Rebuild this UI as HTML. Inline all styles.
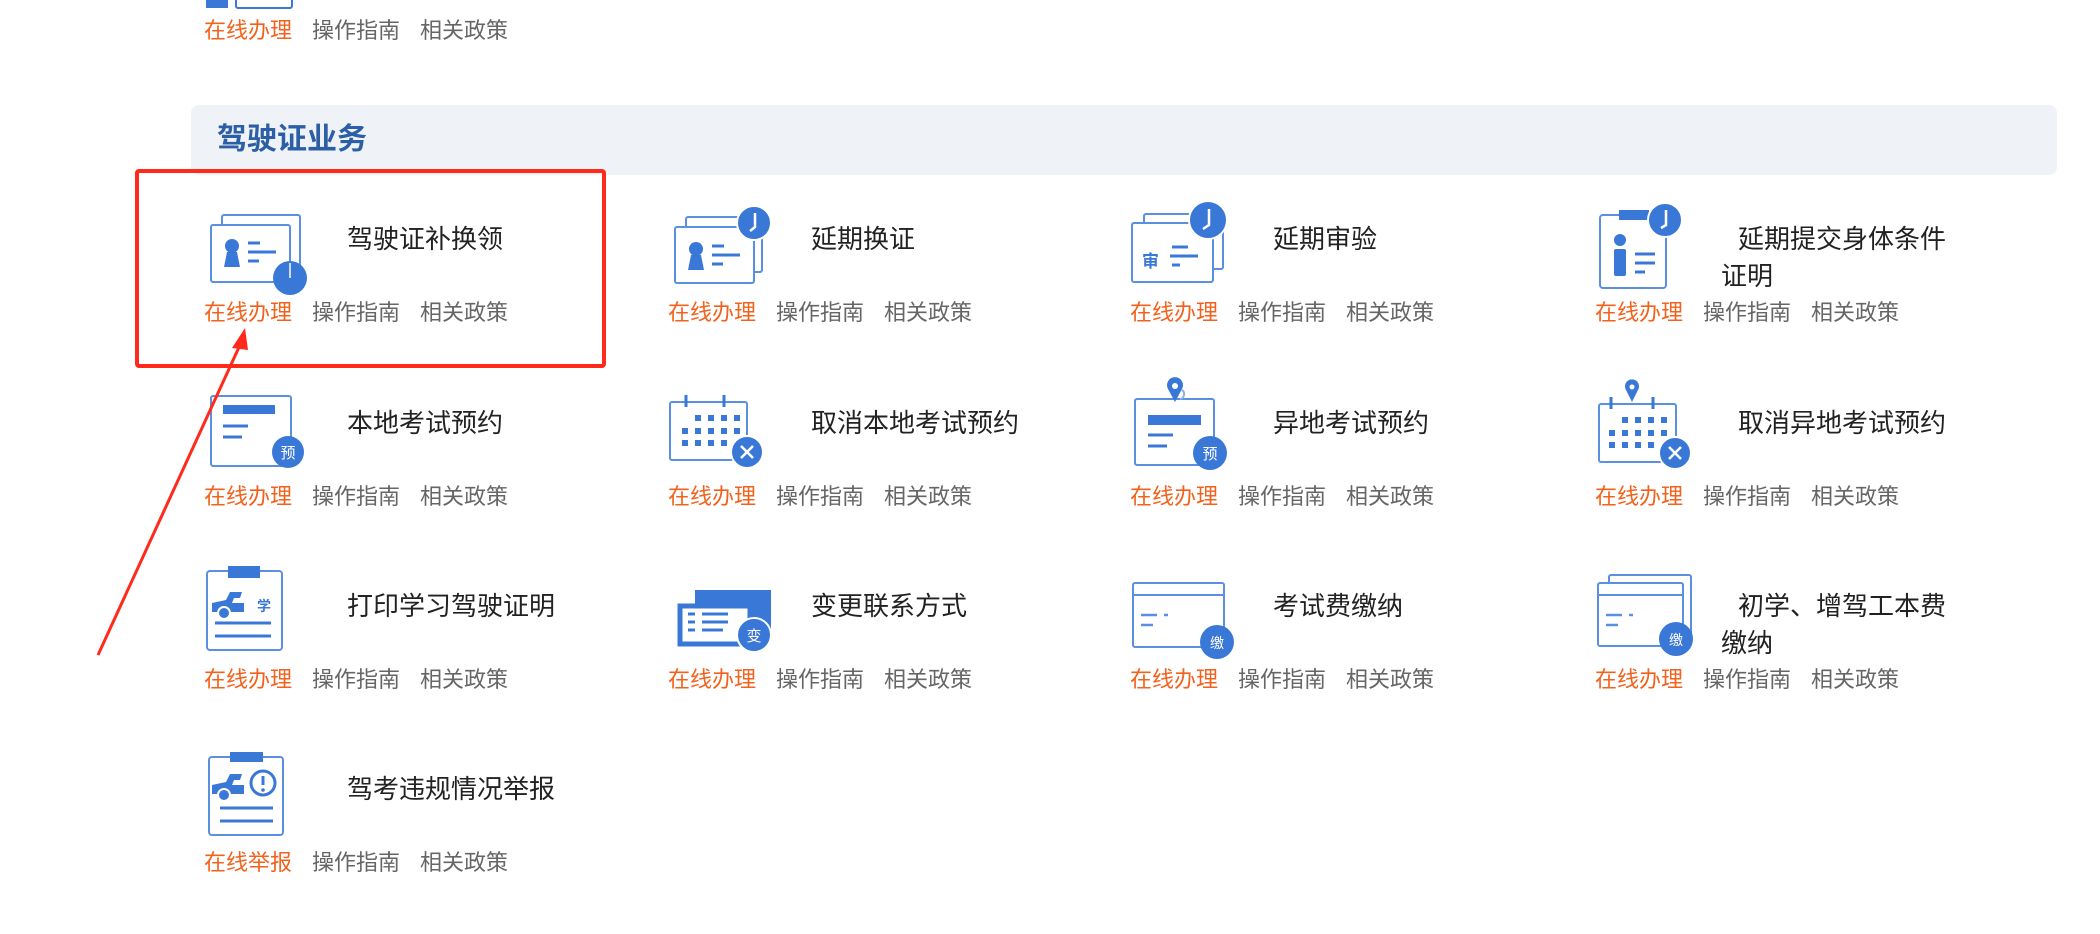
<!DOCTYPE html>
<html><head><meta charset="utf-8">
<style>
html,body{margin:0;padding:0;background:#fff;}
body{width:2100px;height:934px;position:relative;overflow:hidden;font-family:"Liberation Sans","Noto Sans CJK SC",sans-serif;}
.links{position:absolute;font-size:22px;line-height:30px;white-space:nowrap;color:#666;}
.links span{margin-right:20px;}
.links .o{color:#f2621d;}
.item{position:absolute;width:440px;height:150px;}
.item svg{position:absolute;left:0;top:0;overflow:visible;}
.item .t{position:absolute;left:143px;top:21px;font-size:26px;line-height:37px;color:#222;width:240px;}
.item .links{left:0;top:98px;}
.band{position:absolute;left:191px;top:105px;width:1866px;height:70px;background:#eff3f7;border-radius:8px;}
.band h2{margin:0;position:absolute;left:26px;top:16px;font-size:30px;line-height:38px;color:#2d5fa6;font-weight:bold;}
.red{position:absolute;left:135px;top:169px;width:463px;height:191px;border:4px solid #ff2a1c;border-radius:4px;}
</style></head><body>

<svg style="position:absolute;left:204px;top:0" width="110" height="12" viewBox="0 0 110 12"><rect x="2" y="0" width="22" height="8" fill="#3a78d8"/><rect x="32" y="-10" width="56" height="18" rx="2" fill="none" stroke="#3a78d8" stroke-width="2"/></svg>
<div class="links" style="left:204px;top:16px"><span class="o">在线办理</span><span>操作指南</span><span>相关政策</span></div>

<div class="band"><h2>驾驶证业务</h2></div>

<!-- row1 -->
<div class="item" style="left:204px;top:200px">
<svg width="120" height="100" viewBox="0 0 120 100" fill="none" stroke="#5b8fe0" stroke-width="2">
<rect x="18" y="15" width="78" height="55" rx="2"/>
<rect x="7" y="25" width="79" height="57" rx="2" fill="#fff"/>
<circle cx="28" cy="46" r="7" fill="#3a78d8" stroke="none"/>
<path d="M20 67 L23 52 L33 52 L36 67Z" fill="#3a78d8" stroke="none"/>
<path d="M44 43H56M44 52H72M44 61H55" stroke="#3a78d8" stroke-width="3"/>
<circle cx="86" cy="78" r="17" fill="#3a78d8" stroke="none"/>
<path d="M86 63V78" stroke="#fff" stroke-width="1.5"/>
</svg>
<div class="t">驾驶证补换领</div>
<div class="links"><span class="o">在线办理</span><span>操作指南</span><span>相关政策</span></div>
</div>

<div class="item" style="left:668px;top:200px">
<svg width="120" height="100" viewBox="0 0 120 100" fill="none" stroke="#5b8fe0" stroke-width="2">
<rect x="18" y="17" width="76" height="55" rx="2"/>
<rect x="7" y="27" width="79" height="56" rx="2" fill="#fff"/>
<circle cx="28" cy="49" r="7" fill="#3a78d8" stroke="none"/>
<path d="M20 70 L23 55 L33 55 L36 70Z" fill="#3a78d8" stroke="none"/>
<path d="M44 46H56M44 55H72M44 64H55" stroke="#3a78d8" stroke-width="3"/>
<circle cx="86" cy="23" r="17" fill="#3a78d8" stroke="#fff" stroke-width="2"/>
<path d="M87 13V27L82 31" stroke="#fff" stroke-width="2.5"/>
</svg>
<div class="t">延期换证</div>
<div class="links"><span class="o">在线办理</span><span>操作指南</span><span>相关政策</span></div>
</div>

<div class="item" style="left:1130px;top:200px">
<svg width="120" height="100" viewBox="0 0 120 100" fill="none" stroke="#5b8fe0" stroke-width="2">
<rect x="14" y="14" width="79" height="55" rx="2"/>
<rect x="2" y="23" width="81" height="59" rx="2" fill="#fff"/>
<text x="12" y="67" font-size="17" fill="#3a78d8" stroke="none" font-family="Noto Sans CJK SC" font-weight="bold">审</text>
<path d="M42 47H58M40 56H68M42 65H50" stroke="#3a78d8" stroke-width="3"/>
<circle cx="78" cy="20" r="19" fill="#3a78d8" stroke="#fff" stroke-width="2"/>
<path d="M79 9V25L73 29" stroke="#fff" stroke-width="2.5"/>
</svg>
<div class="t">延期审验</div>
<div class="links"><span class="o">在线办理</span><span>操作指南</span><span>相关政策</span></div>
</div>

<div class="item" style="left:1595px;top:200px">
<svg width="120" height="100" viewBox="0 0 120 100" fill="none" stroke="#5b8fe0" stroke-width="2">
<rect x="5" y="15" width="66" height="73" rx="3"/>
<rect x="24" y="10" width="30" height="10" fill="#3a78d8" stroke="none"/>
<circle cx="25" cy="40" r="6" fill="#3a78d8" stroke="none"/>
<rect x="19" y="49" width="12" height="27" rx="2" fill="#3a78d8" stroke="none"/>
<path d="M40 54H60M40 63H60M40 72H50" stroke="#3a78d8" stroke-width="3"/>
<circle cx="70" cy="20" r="17" fill="#3a78d8" stroke="#fff" stroke-width="2"/>
<path d="M71 10V25L66 28" stroke="#fff" stroke-width="2.5"/>
</svg>
<div class="t"><span>延期提交身体条件</span><br><span style="margin-left:-17px">证明</span></div>
<div class="links"><span class="o">在线办理</span><span>操作指南</span><span>相关政策</span></div>
</div>

<!-- row2 -->
<div class="item" style="left:204px;top:384px">
<svg width="120" height="100" viewBox="0 0 120 100" fill="none" stroke="#5b8fe0" stroke-width="2">
<rect x="7" y="12" width="80" height="70" rx="2"/>
<rect x="19" y="21" width="52" height="9" fill="#3a78d8" stroke="none"/>
<path d="M19 42H44M19 53H38" stroke="#3a78d8" stroke-width="3"/>
<circle cx="84" cy="68" r="16" fill="#3a78d8" stroke="none"/>
<text x="84" y="74" font-size="15" text-anchor="middle" fill="#fff" stroke="none" font-family="Noto Sans CJK SC">预</text>
</svg>
<div class="t">本地考试预约</div>
<div class="links"><span class="o">在线办理</span><span>操作指南</span><span>相关政策</span></div>
</div>

<div class="item" style="left:668px;top:384px">
<svg width="120" height="100" viewBox="0 0 120 100" fill="none" stroke="#5b8fe0" stroke-width="2">
<rect x="2" y="18" width="77" height="58" rx="2"/>
<path d="M18 11V23M56 11V23" stroke="#3a78d8" stroke-width="3"/>
<g fill="#3a78d8" stroke="none">
<rect x="27" y="31" width="6" height="6"/><rect x="40" y="31" width="6" height="6"/><rect x="53" y="31" width="6" height="6"/><rect x="66" y="31" width="6" height="6"/>
<rect x="14" y="44" width="6" height="6"/><rect x="27" y="44" width="6" height="6"/><rect x="40" y="44" width="6" height="6"/><rect x="53" y="44" width="6" height="6"/><rect x="66" y="44" width="6" height="6"/>
<rect x="14" y="56" width="6" height="6"/><rect x="27" y="56" width="6" height="6"/><rect x="40" y="56" width="6" height="6"/><rect x="53" y="56" width="6" height="6"/>
</g>
<circle cx="79" cy="68" r="16" fill="#3a78d8" stroke="#fff" stroke-width="2"/>
<path d="M73 62L85 74M85 62L73 74" stroke="#fff" stroke-width="2.5"/>
</svg>
<div class="t">取消本地考试预约</div>
<div class="links"><span class="o">在线办理</span><span>操作指南</span><span>相关政策</span></div>
</div>

<div class="item" style="left:1130px;top:384px">
<svg width="120" height="100" viewBox="0 0 120 100" fill="none" stroke="#5b8fe0" stroke-width="2">
<rect x="5" y="15" width="79" height="66" rx="2"/>
<path d="M45 18 L38 5 A8 8 0 1 1 52 5Z" fill="#3a78d8" stroke="none"/>
<circle cx="45" cy="2" r="3" fill="#fff" stroke="none"/>
<path d="M52 6 A5 5 0 0 1 50 15" stroke="#8fb1e8" stroke-width="2"/>
<rect x="18" y="31" width="53" height="10" fill="#3a78d8" stroke="none"/>
<path d="M18 51H43M18 62H37" stroke="#3a78d8" stroke-width="3"/>
<circle cx="80" cy="69" r="17" fill="#3a78d8" stroke="none"/>
<text x="80" y="75" font-size="15" text-anchor="middle" fill="#fff" stroke="none" font-family="Noto Sans CJK SC">预</text>
</svg>
<div class="t">异地考试预约</div>
<div class="links"><span class="o">在线办理</span><span>操作指南</span><span>相关政策</span></div>
</div>

<div class="item" style="left:1595px;top:384px">
<svg width="120" height="100" viewBox="0 0 120 100" fill="none" stroke="#5b8fe0" stroke-width="2">
<rect x="4" y="20" width="77" height="58" rx="2"/>
<path d="M16 13V25M58 13V25" stroke="#3a78d8" stroke-width="3"/>
<path d="M37 18 L31 6 A7 7 0 1 1 43 6Z" fill="#3a78d8" stroke="none"/>
<circle cx="37" cy="3" r="2.5" fill="#fff" stroke="none"/>
<g fill="#3a78d8" stroke="none">
<rect x="27" y="33" width="6" height="6"/><rect x="40" y="33" width="6" height="6"/><rect x="53" y="33" width="6" height="6"/><rect x="66" y="33" width="6" height="6"/>
<rect x="14" y="46" width="6" height="6"/><rect x="27" y="46" width="6" height="6"/><rect x="40" y="46" width="6" height="6"/><rect x="53" y="46" width="6" height="6"/><rect x="66" y="46" width="6" height="6"/>
<rect x="14" y="58" width="6" height="6"/><rect x="27" y="58" width="6" height="6"/><rect x="40" y="58" width="6" height="6"/><rect x="53" y="58" width="6" height="6"/>
</g>
<circle cx="80" cy="69" r="16" fill="#3a78d8" stroke="#fff" stroke-width="2"/>
<path d="M74 63L86 75M86 63L74 75" stroke="#fff" stroke-width="2.5"/>
</svg>
<div class="t">取消异地考试预约</div>
<div class="links"><span class="o">在线办理</span><span>操作指南</span><span>相关政策</span></div>
</div>

<!-- row3 -->
<div class="item" style="left:204px;top:567px">
<svg width="120" height="100" viewBox="0 0 120 100" fill="none" stroke="#5b8fe0" stroke-width="2">
<rect x="3" y="4" width="75" height="79" rx="3"/>
<rect x="24" y="-1" width="32" height="12" fill="#3a78d8" stroke="none"/>
<path d="M8 36 L22 33 L26 25 L38 25 L36 31 L30 31 L28 36 L40 36 L40 45 L8 45Z" fill="#3a78d8" stroke="none"/>
<circle cx="20" cy="46" r="6" fill="#3a78d8" stroke="#fff" stroke-width="2"/>
<text x="60" y="44" font-size="14" text-anchor="middle" fill="#3a78d8" stroke="none" font-family="Noto Sans CJK SC" font-weight="bold">学</text>
<path d="M11 56H67M11 69H67" stroke="#3a78d8" stroke-width="3"/>
</svg>
<div class="t">打印学习驾驶证明</div>
<div class="links"><span class="o">在线办理</span><span>操作指南</span><span>相关政策</span></div>
</div>

<div class="item" style="left:668px;top:567px">
<svg width="120" height="100" viewBox="0 0 120 100">
<rect x="27" y="23" width="76" height="50" fill="#3a78d8"/>
<rect x="12" y="39" width="70" height="38" fill="#fff" stroke="#3a78d8" stroke-width="5"/>
<path d="M20 47H27M34 47H60M20 55H27M34 55H60M20 63H27M34 63H55" stroke="#3a78d8" stroke-width="3"/>
<circle cx="86" cy="68" r="17" fill="#3a78d8" stroke="#fff" stroke-width="2"/>
<text x="86" y="74" font-size="15" text-anchor="middle" fill="#fff" font-family="Noto Sans CJK SC">变</text>
</svg>
<div class="t">变更联系方式</div>
<div class="links"><span class="o">在线办理</span><span>操作指南</span><span>相关政策</span></div>
</div>

<div class="item" style="left:1130px;top:567px">
<svg width="120" height="100" viewBox="0 0 120 100" fill="none" stroke="#5b8fe0" stroke-width="2">
<rect x="3" y="16" width="91" height="64" rx="2"/>
<path d="M3 28H94" />
<path d="M11 48H27M34 48H38M11 58H23" stroke="#5b8fe0" stroke-width="2.5"/>
<circle cx="87" cy="75" r="17" fill="#3a78d8" stroke="none"/>
<text x="87" y="81" font-size="14" text-anchor="middle" fill="#fff" stroke="none" font-family="Noto Sans CJK SC">缴</text>
</svg>
<div class="t">考试费缴纳</div>
<div class="links"><span class="o">在线办理</span><span>操作指南</span><span>相关政策</span></div>
</div>

<div class="item" style="left:1595px;top:567px">
<svg width="120" height="100" viewBox="0 0 120 100" fill="none" stroke="#5b8fe0" stroke-width="2">
<rect x="14" y="8" width="82" height="65" rx="2"/>
<rect x="3" y="16" width="85" height="63" rx="2" fill="#fff"/>
<path d="M3 28H88"/>
<path d="M11 48H27M34 48H38M11 58H23" stroke="#5b8fe0" stroke-width="2.5"/>
<circle cx="81" cy="72" r="17" fill="#3a78d8" stroke="none"/>
<text x="81" y="78" font-size="14" text-anchor="middle" fill="#fff" stroke="none" font-family="Noto Sans CJK SC">缴</text>
</svg>
<div class="t"><span>初学、增驾工本费</span><br><span style="margin-left:-17px">缴纳</span></div>
<div class="links"><span class="o">在线办理</span><span>操作指南</span><span>相关政策</span></div>
</div>

<!-- row4 -->
<div class="item" style="left:204px;top:750px">
<svg width="120" height="100" viewBox="0 0 120 100" fill="none" stroke="#5b8fe0" stroke-width="2">
<rect x="5" y="7" width="74" height="78" rx="3"/>
<rect x="26" y="2" width="33" height="10" fill="#3a78d8" stroke="none"/>
<path d="M8 35 L22 32 L26 24 L38 24 L36 30 L30 30 L28 35 L40 35 L40 44 L8 44Z" fill="#3a78d8" stroke="none"/>
<circle cx="20" cy="45" r="6" fill="#3a78d8" stroke="#fff" stroke-width="2"/>
<circle cx="59" cy="33" r="12" stroke="#3a78d8" stroke-width="3"/>
<path d="M59 26V35" stroke="#3a78d8" stroke-width="3"/>
<circle cx="59" cy="40" r="1.8" fill="#3a78d8" stroke="none"/>
<path d="M16 58H69M16 71H69" stroke="#3a78d8" stroke-width="3"/>
</svg>
<div class="t">驾考违规情况举报</div>
<div class="links"><span class="o">在线举报</span><span>操作指南</span><span>相关政策</span></div>
</div>

<div class="red"></div>
<svg style="position:absolute;left:0;top:0" width="400" height="700" viewBox="0 0 400 700">
<path d="M98 655 L240 345" stroke="#ff2a1c" stroke-width="3" fill="none"/>
<path d="M245 328 L232 348 L248 350Z" fill="#ff2a1c"/>
</svg>
</body></html>
